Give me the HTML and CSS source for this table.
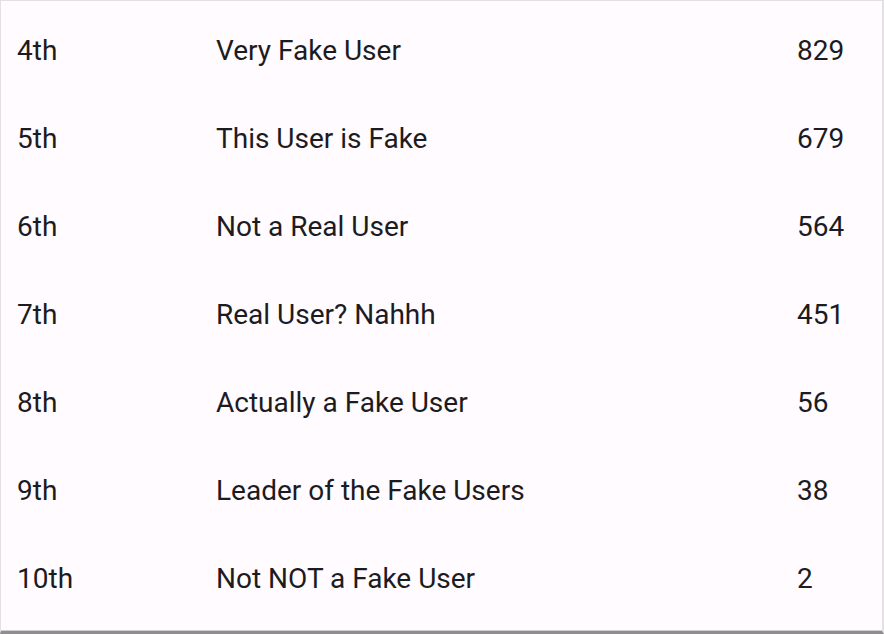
FILE: index.html
```html
<!DOCTYPE html>
<html>
<head>
<meta charset="utf-8">
<link rel="stylesheet" href="styles.css">
</head>
<body>
<div class="board">
  <div class="row"><span class="rank">4th</span><span class="name">Very Fake User</span><span class="score">829</span></div>
  <div class="row"><span class="rank">5th</span><span class="name">This User is Fake</span><span class="score">679</span></div>
  <div class="row"><span class="rank">6th</span><span class="name">Not a Real User</span><span class="score">564</span></div>
  <div class="row"><span class="rank">7th</span><span class="name">Real User? Nahhh</span><span class="score">451</span></div>
  <div class="row"><span class="rank">8th</span><span class="name">Actually a Fake User</span><span class="score">56</span></div>
  <div class="row"><span class="rank">9th</span><span class="name">Leader of the Fake Users</span><span class="score">38</span></div>
  <div class="row"><span class="rank">10th</span><span class="name">Not NOT a Fake User</span><span class="score">2</span></div>
</div>
</body>
</html>
```
FILE: styles.css
```css
html, body {
  margin: 0;
  padding: 0;
  background: #fffbfe;
}
.board {
  box-sizing: border-box;
  width: 884px;
  height: 634px;
  border: 1px solid #e2e0e2;
  border-right: 2px solid #e2e0e2;
  border-bottom: 3px solid #8e8d8f;
  box-shadow: inset 0 -1px 0 #d0ced0;
  background: #fffbfe;
  padding-top: 5px;
  display: flex;
  flex-direction: column;
  font-family: Roboto, "Liberation Sans", sans-serif;
  font-size: 28px;
  color: #1c1b1f;
}
.row {
  height: 88px;
  display: grid;
  grid-template-columns: 199px 581px 1fr;
  align-items: center;
  padding-left: 16px;
}
```
